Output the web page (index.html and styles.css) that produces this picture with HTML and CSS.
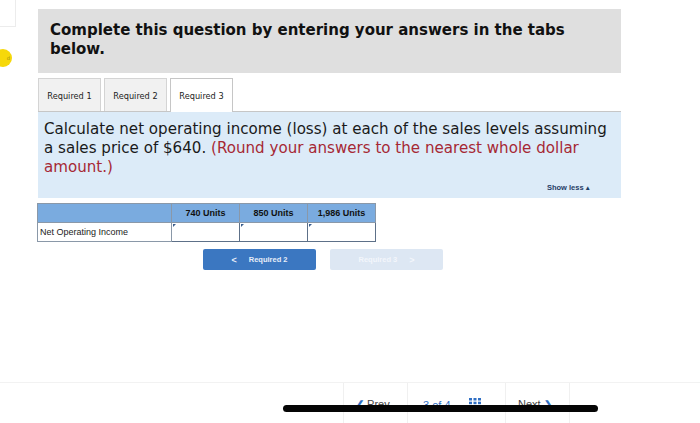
FILE: index.html
```html
<!DOCTYPE html>
<html>
<head>
<meta charset="utf-8">
<link rel="stylesheet" href="styles.css">
</head>
<body>
<div class="corner-box"></div>
<div class="yellow-dot">d</div>
<div class="page">
  <div class="header">Complete this question by entering your answers in the tabs below.</div>
  <div class="tabs">
    <div class="tab">Required 1</div>
    <div class="tab">Required 2</div>
    <div class="tab active">Required 3</div>
  </div>
  <div class="prompt">
    <p class="prompt-text">Calculate net operating income (loss) at each of the sales levels assuming a sales price of $640. <span class="red">(Round your answers to the nearest whole dollar amount.)</span></p>
    <div class="show-less">Show less<span class="tri">▲</span></div>
  </div>
  <table class="grid">
    <tr class="head">
      <th class="label-col"></th>
      <th>740 Units</th>
      <th>850 Units</th>
      <th>1,986 Units</th>
    </tr>
    <tr>
      <td class="label">Net Operating Income</td>
      <td class="input"><span class="flag"></span></td>
      <td class="input"><span class="flag"></span></td>
      <td class="input"><span class="flag"></span></td>
    </tr>
  </table>
  <div class="buttons">
    <div class="btn primary"><span class="chev">&lt;</span>Required 2</div>
    <div class="btn disabled">Required 3<span class="chev right">&gt;</span></div>
  </div>
</div>
<div class="footer">
  <div class="nav">
    <div class="nav-item prev"><span class="arrow">❮</span> Prev</div>
    <div class="nav-item count"><span>3</span> of 4 <svg class="gridicon" width="12" height="10" viewBox="0 0 12 10"><g fill="#2f6fc4"><rect x="0" y="0" width="3" height="2.5"/><rect x="4.5" y="0" width="3" height="2.5"/><rect x="9" y="0" width="3" height="2.5"/><rect x="0" y="3.7" width="3" height="2.5"/><rect x="4.5" y="3.7" width="3" height="2.5"/><rect x="9" y="3.7" width="3" height="2.5"/><rect x="0" y="7.4" width="3" height="2.5"/><rect x="4.5" y="7.4" width="3" height="2.5"/><rect x="9" y="7.4" width="3" height="2.5"/></g></svg></div>
    <div class="nav-item next">Next <span class="arrow">❯</span></div>
  </div>
  <div class="redact"></div>
</div>
</body>
</html>
```

FILE: styles.css
```css
html, body {
  margin: 0;
  padding: 0;
  background: #ffffff;
  width: 700px;
  height: 423px;
  overflow: hidden;
  position: relative;
  font-family: "DejaVu Sans", Verdana, sans-serif;
}

.corner-box {
  position: absolute;
  left: -2px;
  top: -2px;
  width: 16px;
  height: 27px;
  border: 1px solid #ececec;
  background: #fff;
}

.yellow-dot {
  position: absolute;
  left: -6px;
  top: 49px;
  width: 18px;
  height: 18px;
  border-radius: 50%;
  background: #f6d80a;
  color: #a08a10;
  font-size: 5px;
  line-height: 18px;
  text-align: right;
  padding-right: 2px;
  box-sizing: border-box;
}

.page {
  margin-left: 38px;
  padding-top: 9px;
  width: 583px;
}

.header {
  background: #dfdfdf;
  height: 64px;
  box-sizing: border-box;
  padding: 12px 40px 0 12px;
  font-weight: bold;
  font-size: 15px;
  line-height: 19px;
  color: #111;
}

.tabs {
  display: flex;
  gap: 3px;
  margin-top: 5px;
  height: 33px;
  border-bottom: 1px solid #c6c6c6;
}

.tab {
  width: 63px;
  height: 33px;
  box-sizing: border-box;
  border: 1px solid #d4d4d4;
  border-bottom: none;
  background: #f1f1f1;
  font-size: 8.2px;
  color: #222;
  display: flex;
  align-items: center;
  justify-content: center;
  padding-top: 1px;
}

.tab.active {
  background: #ffffff;
  height: 34px;
  width: 63px;
  border-color: #c6c6c6;
}

.prompt {
  background: #dcebf8;
  height: 86px;
  box-sizing: border-box;
  padding: 8px 6px 0 6px;
  position: relative;
}

.prompt-text {
  margin: 0;
  font-size: 15.1px;
  line-height: 19px;
  color: #1a1a1a;
}

.red {
  color: #a62834;
}

.show-less {
  position: absolute;
  right: 30px;
  bottom: 6px;
  font-family: "Liberation Sans", Arial, sans-serif;
  font-size: 7.5px;
  font-weight: bold;
  color: #1f3c66;
}

.show-less .tri {
  font-size: 6.5px;
  margin-left: 1px;
}

.grid {
  margin-top: 5px;
  margin-left: -1px;
  border-collapse: collapse;
  font-family: "Liberation Sans", Arial, sans-serif;
}

.grid th {
  background: #7aabdf;
  height: 18px;
  padding: 0;
  font-size: 9px;
  font-weight: bold;
  color: #111;
  border: 1px solid #8a98a8;
  width: 67px;
  text-align: center;
}

.grid th.label-col {
  width: 133px;
}

.grid td {
  height: 18px;
  padding: 0;
  border: 1px solid #8a98a8;
}

.grid td.label {
  font-size: 9px;
  color: #222;
  padding-left: 2px;
  background: #fff;
}

.grid td.input {
  background: #fff;
  border: 1.5px solid #5d7088;
  position: relative;
}

.flag {
  position: absolute;
  left: 1px;
  top: 1px;
  width: 0;
  height: 0;
  border-top: 3px solid #3a5e8e;
  border-right: 3px solid transparent;
}

.buttons {
  display: flex;
  gap: 14px;
  margin-top: 7px;
  margin-left: 165px;
}

.btn {
  width: 113px;
  height: 21px;
  border-radius: 2px;
  font-family: "Liberation Sans", Arial, sans-serif;
  font-size: 7.5px;
  font-weight: bold;
  display: flex;
  align-items: center;
  justify-content: center;
}

.btn.primary {
  background: #3b77c1;
  color: #e8eef8;
}

.btn.disabled {
  background: #dde7f3;
  color: #f3f6fb;
}

.chev {
  font-size: 9px;
  margin-right: 12px;
}

.chev.right {
  margin-right: 0;
  margin-left: 12px;
}

.footer {
  margin-top: 112px;
  border-top: 1px solid #f2f2f2;
  height: 40px;
  position: relative;
}

.nav {
  display: flex;
  margin-left: 343px;
  height: 40px;
}

.nav-item {
  border-left: 1px solid #f0f0f0;
  font-family: "Liberation Sans", Arial, sans-serif;
  font-size: 11px;
  color: #444;
  padding-top: 15px;
  box-sizing: border-box;
  height: 40px;
}

.nav-item .arrow {
  color: #2f6fc4;
  font-size: 10px;
  font-weight: bold;
}

.prev {
  width: 64px;
  padding-left: 12px;
}

.count {
  width: 98px;
  padding-left: 15px;
  color: #2f6fc4;
}

.count .gridicon {
  margin-left: 15px;
  vertical-align: 1px;
}

.next {
  width: 65px;
  padding-left: 12px;
  border-right: 1px solid #f0f0f0;
}

.redact {
  position: absolute;
  left: 283px;
  top: 22px;
  width: 315px;
  height: 7px;
  background: #050505;
  border-radius: 4px;
}
```
